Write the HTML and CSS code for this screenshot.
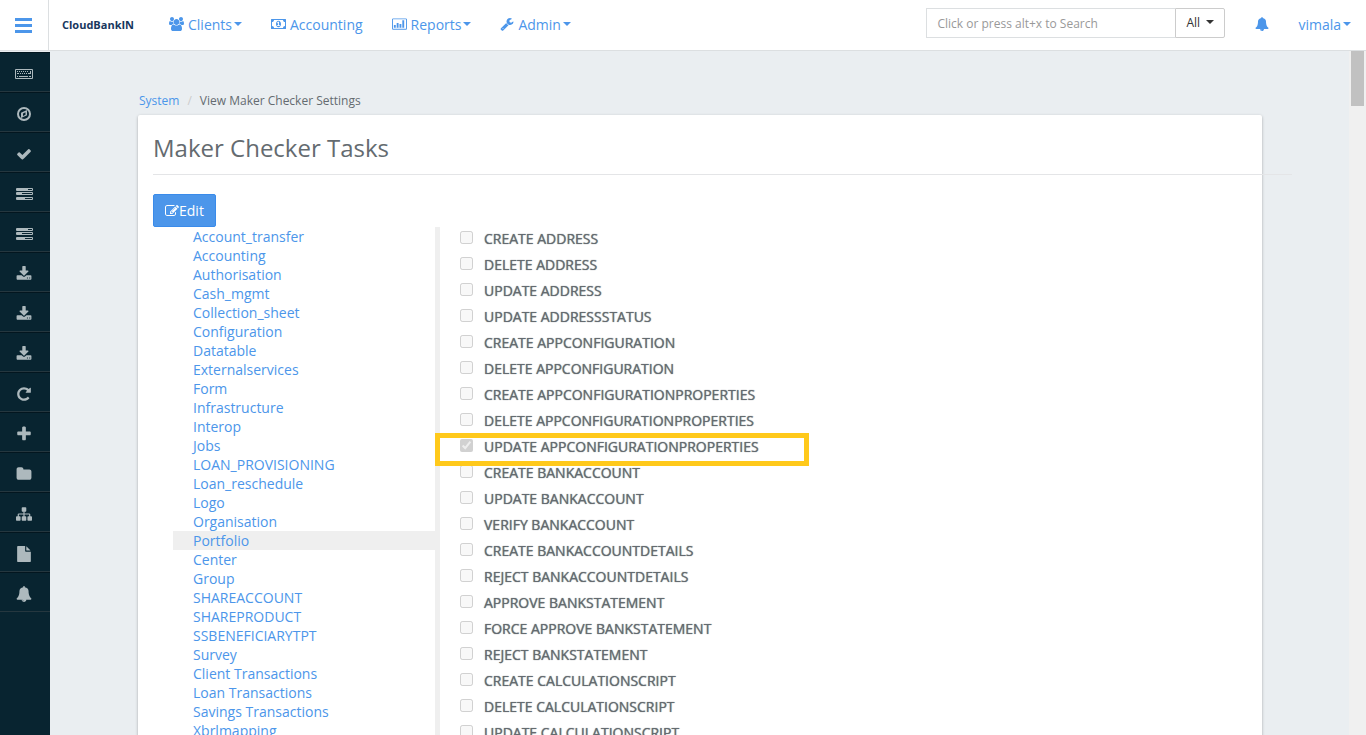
FILE: index.html
```html
<!DOCTYPE html>
<html lang="en">
<head>
<meta charset="utf-8">
<title>View Maker Checker Settings</title>
<link rel="stylesheet" href="styles.css">
</head>
<body>
<svg class="sprite" aria-hidden="true">
  <symbol id="i-users" viewBox="-64 0 1920 1792"><path d="M529 896q-162 5-265 128h-134q-82 0-138-40.500t-56-118.500q0-353 124-353 6 0 43.500 21t97.500 42.500 119 21.500q67 0 133-23-5 37-5 66 0 139 81 256zm1071 637q0 120-73 189.500t-194 69.500h-874q-121 0-194-69.500t-73-189.500q0-53 3.500-103.500t14-109 26.500-108.500 43-97.500 62-81 85.500-53.500 111.500-20q10 0 43 21.500t73 48 107 48 135 21.500 135-21.500 107-48 73-48 43-21.500q61 0 111.500 20t85.500 53.500 62 81 43 97.500 26.500 108.500 14 109 3.500 103.500zm-1024-1277q0 106-75 181t-181 75-181-75-75-181 75-181 181-75 181 75 75 181zm704 384q0 159-112.500 271.500t-271.500 112.500-271.500-112.500-112.500-271.500 112.500-271.500 271.500-112.500 271.500 112.500 112.500 271.500zm576 225q0 78-56 118.500t-138 40.500h-134q-103-123-265-128 81-117 81-256 0-29-5-66 66 23 133 23 59 0 119-21.500t97.500-42.500 43.500-21q124 0 124 353zm-128-609q0 106-75 181t-181 75-181-75-75-181 75-181 181-75 181 75 75 181z"/></symbol>
  <symbol id="i-money" viewBox="-64 0 1920 1792"><path fill-rule="evenodd" d="M0 256h1792q64 0 64 64v1152q0 64-64 64H0q-64 0-64-64V320q0-64 64-64zM320 384q0 106-75 181T64 640v512q106 0 181 75t75 181h1152q0-106 75-181t181-75V640q-106 0-181-75t-75-181zM896 480c190 0 320 190 320 416s-130 416-320 416-320-190-320-416 130-416 320-416zM704 1152h384v-96H960V608H846L700 743l77 80 69-64v297H704z"/></symbol>
  <symbol id="i-chart" viewBox="-128 0 2048 1792"><path fill-rule="evenodd" d="M32 128h1728q160 0 160 160v1216q0 160-160 160H32q-160 0-160-160V288q0-160 160-160zm0 128q-32 0-32 32v1216q0 32 32 32h1728q32 0 32-32V288q0-32-32-32zM128 1024h256v384H128zm384-256h256v640H512zm384 128h256v512H896zm384-512h256v1024h-256z"/></symbol>
  <symbol id="i-wrench" viewBox="0 0 1792 1792"><path d="M448 1472q0-26-19-45t-45-19-45 19-19 45 19 45 45 19 45-19 19-45zm644-420l-682 682q-37 37-90 37-52 0-91-37l-106-108q-38-36-38-90 0-53 38-91l681-681q39 98 114.500 173.500t173.500 114.500zm634-435q0 39-23 106-47 134-164.500 217.500t-258.500 83.500q-185 0-316.500-131.500t-131.500-316.500 131.500-316.500 316.500-131.500q58 0 121.500 16.500t107.500 46.500q16 11 16 28t-16 28l-293 169v224l193 107q5-3 79-48.500t135.500-81 70.500-35.500q15 0 23.500 10t8.500 25z"/></symbol>
  <symbol id="i-bell" viewBox="0 0 1792 1792"><path d="M912 1696q0-16-16-16-59 0-101.500-42.500t-42.500-101.500q0-16-16-16t-16 16q0 73 51.500 124.500t124.500 51.500q16 0 16-16zm816-288q0 52-38 90t-90 38h-448q0 106-75 181t-181 75-181-75-75-181h-448q-52 0-90-38t-38-90q50-42 91-88t85-119.500 74.500-158.500 50-206 19.500-260q0-152 117-282.500t307-158.500q-8-19-8-39 0-40 28-68t68-28 68 28 28 68q0 20-8 39 190 28 307 158.500t117 282.500q0 139 19.500 260t50 206 74.500 158.500 85 119.500 91 88z"/></symbol>
  <symbol id="i-keyboard" viewBox="0 0 18 16"><path fill-rule="evenodd" d="M1 3h16q1 0 1 1v8q0 1-1 1H1q-1 0-1-1V4q0-1 1-1zm0 1v8h16V4zM2 5h1v1H2zm2 0h1v1H4zm2 0h1v1H6zm2 0h1v1H8zm2 0h1v1h-1zm2 0h1v1h-1zm3 0h1v3h-3V7h2zM2 7h2v1H2zm3 0h1v1H5zm2 0h1v1H7zm2 0h1v1H9zm2 0h1v1h-1zM2 10h1v1H2zm2 0h9v1H4zm10 0h2v1h-2z"/></symbol>
  <symbol id="i-compass" viewBox="0 0 16 16"><path fill-rule="evenodd" d="M8 1a7 7 0 1 1 0 14A7 7 0 0 1 8 1zm0 2a5 5 0 1 0 0 10A5 5 0 0 0 8 3zm3 1v5.200L5 12V6.800zM7 7.500v2.400l2.500-1.200V6.300z"/></symbol>
  <symbol id="i-check" viewBox="0 0 1792 1792"><path d="M1671 566q0 40-28 68l-724 724-136 136q-28 28-68 28t-68-28l-136-136-362-362q-28-28-28-68t28-68l136-136q28-28 68-28t68 28l294 295 656-657q28-28 68-28t68 28l136 136q28 28 28 68z"/></symbol>
  <symbol id="i-tasks" viewBox="0 0 17 16"><path fill-rule="evenodd" d="M1 2h15q1 0 1 1v1q0 1-1 1H1Q0 5 0 4V3q0-1 1-1zm11 1v1h4V3zM1 6h15q1 0 1 1v1q0 1-1 1H1Q0 9 0 8V7q0-1 1-1zm5 1v1h10V7zM1 11h15q1 0 1 1v1q0 1-1 1H1q-1 0-1-1v-1q0-1 1-1zm8 1v1h7v-1z"/></symbol>
  <symbol id="i-download" viewBox="0 0 1792 1792"><path d="M1344 1344q0-26-19-45t-45-19-45 19-19 45 19 45 45 19 45-19 19-45zm256 0q0-26-19-45t-45-19-45 19-19 45 19 45 45 19 45-19 19-45zm128-224v320q0 40-28 68t-68 28h-1472q-40 0-68-28t-28-68v-320q0-40 28-68t68-28h465l135 136q58 56 136 56t136-56l136-136h464q40 0 68 28t28 68zm-325-569q17 41-14 70l-448 448q-18 19-45 19t-45-19l-448-448q-31-29-14-70 17-39 59-39h256v-448q0-26 19-45t45-19h256q26 0 45 19t19 45v448h256q42 0 59 39z"/></symbol>
  <symbol id="i-repeat" viewBox="0 0 1792 1792"><path d="M1664 256v448q0 26-19 45t-45 19h-448q-42 0-59-40-17-39 14-69l138-138q-148-137-349-137-104 0-198.500 40.500t-163.500 109.500-109.500 163.500-40.500 198.500 40.500 198.500 109.500 163.500 163.500 109.500 198.500 40.500q119 0 225-52t179-147q7-10 23-12 15 0 25 9l137 138q9 8 9.500 20.500t-7.500 22.500q-109 132-264 204.500t-327 72.500q-156 0-298-61t-245-164-164-245-61-298 61-298 164-245 245-164 298-61q147 0 284.500 55.500t244.500 156.500l130-129q29-31 70-14 39 17 39 59z"/></symbol>
  <symbol id="i-plus" viewBox="64 64 1664 1664"><path d="M1600 736v192q0 40-28 68t-68 28h-416v416q0 40-28 68t-68 28h-192q-40 0-68-28t-28-68v-416h-416q-40 0-68-28t-28-68v-192q0-40 28-68t68-28h416v-416q0-40 28-68t68-28h192q40 0 68 28t28 68v416h416q40 0 68 28t28 68z"/></symbol>
  <symbol id="i-folder" viewBox="0 0 1792 1792"><path d="M1728 608v704q0 92-66 158t-158 66h-1216q-92 0-158-66t-66-158v-960q0-92 66-158t158-66h320q92 0 158 66t66 158v32h672q92 0 158 66t66 158z"/></symbol>
  <symbol id="i-sitemap" viewBox="0 0 1792 1792"><path d="M1792 1248v320q0 40-28 68t-68 28h-320q-40 0-68-28t-28-68v-320q0-40 28-68t68-28h96v-192h-512v192h96q40 0 68 28t28 68v320q0 40-28 68t-68 28h-320q-40 0-68-28t-28-68v-320q0-40 28-68t68-28h96v-192h-512v192h96q40 0 68 28t28 68v320q0 40-28 68t-68 28h-320q-40 0-68-28t-28-68v-320q0-40 28-68t68-28h96v-192q0-52 38-90t90-38h512v-192h-96q-40 0-68-28t-28-68v-320q0-40 28-68t68-28h320q40 0 68 28t28 68v320q0 40-28 68t-68 28h-96v192h512q52 0 90 38t38 90v192h96q40 0 68 28t28 68z"/></symbol>
  <symbol id="i-file" viewBox="0 0 1792 1792"><path d="M1152 512v-472q22 14 36 28l408 408q14 14 28 36h-472zm-128 32q0 40 28 68t68 28h544v1056q0 40-28 68t-68 28h-1344q-40 0-68-28t-28-68v-1600q0-40 28-68t68-28h800v544z"/></symbol>
  <symbol id="i-edit" viewBox="0 0 1792 1792"><path d="M888 1184l116-116-152-152-116 116v56h96v96h56zm440-720q-16-16-33 1l-350 350q-17 17-1 33t33-1l350-350q17-17 1-33zm80 594v190q0 119-84.500 203.500t-203.500 84.500h-832q-119 0-203.500-84.500t-84.500-203.500v-832q0-119 84.500-203.500t203.500-84.500h832q63 0 117 25 15 7 18 23 3 17-9 29l-49 49q-14 14-32 8-23-6-45-6h-832q-66 0-113 47t-47 113v832q0 66 47 113t113 47h832q66 0 113-47t47-113v-126q0-13 9-22l64-64q15-15 35-7t20 29zm-96-738l288 288-672 672h-288v-288zm444 132l-92 92-288-288 92-92q28-28 68-28t68 28l152 152q28 28 28 68t-28 68z"/></symbol>
</svg>

<header class="topbar">
  <button class="menu-toggle" type="button" aria-label="Toggle menu"><span></span><span></span><span></span></button>
  <a class="brand" href="#">CloudBankIN</a>
  <nav class="mainnav">
    <a href="#"><svg class="icon icon-wide"><use href="#i-users"/></svg>Clients<i class="caret"></i></a>
    <a href="#"><svg class="icon icon-wide"><use href="#i-money"/></svg>Accounting</a>
    <a href="#"><svg class="icon icon-wide"><use href="#i-chart"/></svg>Reports<i class="caret"></i></a>
    <a href="#"><svg class="icon"><use href="#i-wrench"/></svg>Admin<i class="caret"></i></a>
  </nav>
  <form class="search">
    <input type="text" placeholder="Click or press alt+x to Search" aria-label="Search">
    <button type="button">All<i class="caret"></i></button>
  </form>
  <a class="alerts" href="#" aria-label="Notifications"><svg class="icon"><use href="#i-bell"/></svg></a>
  <a class="user" href="#">vimala<i class="caret"></i></a>
</header>

<div class="shell">
  <nav class="sidebar" aria-label="Shortcuts">
    <a href="#" aria-label="Navigation"><svg class="icon icon-keyboard"><use href="#i-keyboard"/></svg></a>
    <a href="#" aria-label="Explore"><svg class="icon"><use href="#i-compass"/></svg></a>
    <a href="#" aria-label="Checker inbox"><svg class="icon"><use href="#i-check"/></svg></a>
    <a href="#" aria-label="Tasks"><svg class="icon icon-tasks"><use href="#i-tasks"/></svg></a>
    <a href="#" aria-label="Collections"><svg class="icon icon-tasks"><use href="#i-tasks"/></svg></a>
    <a href="#" aria-label="Client import"><svg class="icon"><use href="#i-download"/></svg></a>
    <a href="#" aria-label="Loan import"><svg class="icon"><use href="#i-download"/></svg></a>
    <a href="#" aria-label="Savings import"><svg class="icon"><use href="#i-download"/></svg></a>
    <a href="#" aria-label="Refresh"><svg class="icon"><use href="#i-repeat"/></svg></a>
    <a href="#" aria-label="Add"><svg class="icon"><use href="#i-plus"/></svg></a>
    <a href="#" aria-label="Folder"><svg class="icon"><use href="#i-folder"/></svg></a>
    <a href="#" aria-label="Organisation"><svg class="icon"><use href="#i-sitemap"/></svg></a>
    <a href="#" aria-label="Report"><svg class="icon"><use href="#i-file"/></svg></a>
    <a href="#" aria-label="Notifications"><svg class="icon"><use href="#i-bell"/></svg></a>
  </nav>

  <main class="content">
    <ol class="breadcrumb"><li><a href="#">System</a></li><li>View Maker Checker Settings</li></ol>
    <section class="card">
      <h1>Maker Checker Tasks</h1>
      <hr>
      <button class="edit" type="button"><svg class="icon"><use href="#i-edit"/></svg>Edit</button>
      <div class="columns">
        <ul class="groups">
          <li><a href="#">Account_transfer</a></li>
          <li><a href="#">Accounting</a></li>
          <li><a href="#">Authorisation</a></li>
          <li><a href="#">Cash_mgmt</a></li>
          <li><a href="#">Collection_sheet</a></li>
          <li><a href="#">Configuration</a></li>
          <li><a href="#">Datatable</a></li>
          <li><a href="#">Externalservices</a></li>
          <li><a href="#">Form</a></li>
          <li><a href="#">Infrastructure</a></li>
          <li><a href="#">Interop</a></li>
          <li><a href="#">Jobs</a></li>
          <li><a href="#">LOAN_PROVISIONING</a></li>
          <li><a href="#">Loan_reschedule</a></li>
          <li><a href="#">Logo</a></li>
          <li><a href="#">Organisation</a></li>
          <li class="selected"><a href="#">Portfolio</a></li>
          <li><a href="#">Center</a></li>
          <li><a href="#">Group</a></li>
          <li><a href="#">SHAREACCOUNT</a></li>
          <li><a href="#">SHAREPRODUCT</a></li>
          <li><a href="#">SSBENEFICIARYTPT</a></li>
          <li><a href="#">Survey</a></li>
          <li><a href="#">Client Transactions</a></li>
          <li><a href="#">Loan Transactions</a></li>
          <li><a href="#">Savings Transactions</a></li>
          <li><a href="#">Xbrlmapping</a></li>
        </ul>
        <div class="tasks">
          <label><input type="checkbox" disabled>CREATE ADDRESS</label>
          <label><input type="checkbox" disabled>DELETE ADDRESS</label>
          <label><input type="checkbox" disabled>UPDATE ADDRESS</label>
          <label><input type="checkbox" disabled>UPDATE ADDRESSSTATUS</label>
          <label><input type="checkbox" disabled>CREATE APPCONFIGURATION</label>
          <label><input type="checkbox" disabled>DELETE APPCONFIGURATION</label>
          <label><input type="checkbox" disabled>CREATE APPCONFIGURATIONPROPERTIES</label>
          <label><input type="checkbox" disabled>DELETE APPCONFIGURATIONPROPERTIES</label>
          <label class="marked"><input type="checkbox" checked disabled>UPDATE APPCONFIGURATIONPROPERTIES</label>
          <label><input type="checkbox" disabled>CREATE BANKACCOUNT</label>
          <label><input type="checkbox" disabled>UPDATE BANKACCOUNT</label>
          <label><input type="checkbox" disabled>VERIFY BANKACCOUNT</label>
          <label><input type="checkbox" disabled>CREATE BANKACCOUNTDETAILS</label>
          <label><input type="checkbox" disabled>REJECT BANKACCOUNTDETAILS</label>
          <label><input type="checkbox" disabled>APPROVE BANKSTATEMENT</label>
          <label><input type="checkbox" disabled>FORCE APPROVE BANKSTATEMENT</label>
          <label><input type="checkbox" disabled>REJECT BANKSTATEMENT</label>
          <label><input type="checkbox" disabled>CREATE CALCULATIONSCRIPT</label>
          <label><input type="checkbox" disabled>DELETE CALCULATIONSCRIPT</label>
          <label><input type="checkbox" disabled>UPDATE CALCULATIONSCRIPT</label>
        </div>
      </div>
    </section>
  </main>
  <div class="scrollbar" aria-hidden="true"><div class="thumb"></div></div>
</div>
</body>
</html>
```
FILE: styles.css
```css
*, *::before, *::after { box-sizing: border-box; }
body {
  margin: 0;
  height: 100vh;
  display: flex;
  flex-direction: column;
  overflow: hidden;
  background: #eaeef1;
  color: #646b70;
  font: 14px/19px "Open Sans", sans-serif;
}
a { color: #4c96ea; text-decoration: none; }
button, input { font-family: inherit; }
.sprite { position: absolute; width: 0; height: 0; }
.icon { width: 14px; height: 14px; fill: currentColor; flex: none; overflow: visible; }
.icon-wide { width: 15px; }
.caret {
  border: 4px solid transparent;
  border-top-color: currentColor;
  border-bottom: 0;
  margin-left: 2px;
}

/* Top bar */
.topbar {
  flex: none;
  display: flex;
  align-items: center;
  height: 51px;
  padding: 0 15px 2px 0;
  background: #fff;
  border-bottom: 1px solid #dcdfe1;
}
.menu-toggle {
  height: 50px;
  margin-bottom: -2px;
  width: 49px;
  padding: 0 0 0 15px;
  border: 0;
  border-right: 1px solid #dcdfe1;
  background: none;
  display: flex;
  flex-direction: column;
  justify-content: center;
  gap: 3px;
}
.menu-toggle span { width: 17px; height: 3px; background: #4c96ea; }
.brand {
  width: 107px;
  padding-left: 13px;
  color: #17375e;
  font-size: 11px;
  font-weight: 700;
}
.mainnav { display: flex; gap: 29px; padding-left: 13px; }
.mainnav a { display: flex; align-items: center; }
.mainnav .icon { margin-right: 4px; }
.search { display: flex; margin-left: auto; height: 30px; margin-bottom: 2px; }
.search input {
  width: 249px;
  padding: 0 10px;
  border: 1px solid #dcdfe1;
  border-right: 0;
  font-size: 12px;
  color: #555;
}
.search input::placeholder { color: #999; }
.search button {
  display: flex;
  align-items: center;
  width: 50px;
  padding: 0 0 2px 10px;
  border: 1px solid #ccc;
  border-radius: 0 2px 2px 0;
  background: #fff;
  color: #333;
  font-size: 12px;
}
.search .caret { margin-left: 6px; }
.alerts { display: flex; margin: 0 29px 0 30px; }
.user { display: flex; align-items: center; }

/* Page body */
.shell { flex: 1; min-height: 0; display: flex; }
.sidebar { flex: none; width: 50px; margin-top: 1px; background: #082430; }
.sidebar a {
  display: flex;
  align-items: center;
  justify-content: center;
  height: 40px;
  padding: 4px 2px 0 0;
  border-top: 1px solid #03161f;
  border-bottom: 1px solid #25373f;
  color: #adb9bd;
}
.sidebar .icon { width: 16px; height: 16px; }
.sidebar .icon-keyboard { width: 18px; height: 18px; }
.sidebar .icon-tasks { width: 17px; }

.content { flex: 1; min-width: 0; padding: 40px 87px 0 88px; overflow: hidden; }
.breadcrumb {
  display: flex;
  margin: 0;
  padding: 0 1px 5px;
  list-style: none;
  font-size: 12px;
}
.breadcrumb li + li::before { content: "/"; padding: 0 8px; color: #ccc; }
.card {
  min-height: 100%;
  padding: 15px;
  background: #fff;
  border-radius: 2px;
  box-shadow: 0 1px 3px rgba(0, 0, 0, .3);
}
.card h1 { margin: 0; font-size: 24px; line-height: 36px; font-weight: 400; }
.card hr { margin: 8px -45px 19px 0; border: 0; border-top: 1px solid #e4e5e7; }
.edit {
  display: flex;
  align-items: center;
  height: 33px;
  padding: 0 11px;
  border: 1px solid #3a8bea;
  border-radius: 2px;
  background: #4c96ea;
  color: #fff;
  font-size: 14px;
}
.columns { display: flex; padding-left: 20px; }
.groups { width: 262px; margin: 0; padding: 0; list-style: none; }
.groups li { padding-left: 20px; }
.groups .selected { background: #efefef; }
.tasks { flex: 1; border-left: 5px solid #efefef; padding-left: 20px; }
.tasks label {
  position: relative;
  display: flex;
  align-items: flex-start;
  height: 26px;
  padding-top: 2px;
  text-shadow: 0 0 1px #646b70;
}
.tasks input { width: 13px; height: 13px; margin: 2px 11px 0 0; }
.tasks .marked { z-index: 1; }
.tasks .marked::after {
  content: "";
  position: absolute;
  left: -25px;
  top: -2px;
  width: 374px;
  height: 33px;
  border: 5px solid #ffc91b;
}

/* Scroll track */
.scrollbar { flex: none; width: 17px; padding: 0 2px; background: #f0f0f0; }
.thumb { height: 55px; background: #c1c1c1; }
```
